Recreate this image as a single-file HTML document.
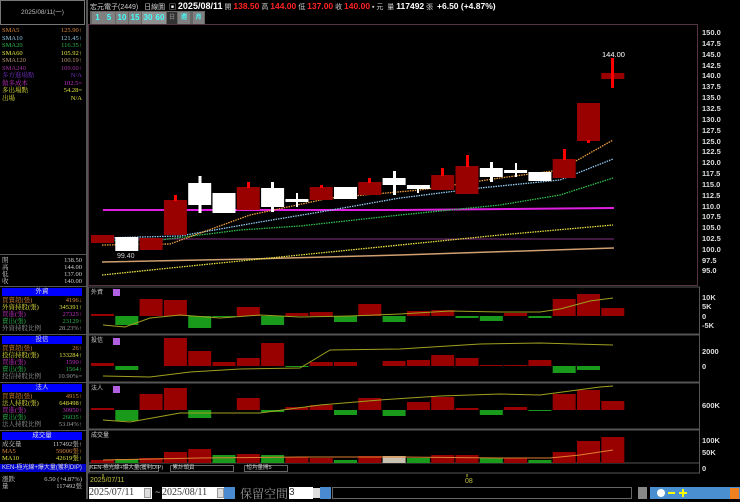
<!DOCTYPE html>
<html><head><meta charset="utf-8"><style>
*{margin:0;padding:0;box-sizing:border-box}
body{width:740px;height:499px;background:#000;overflow:hidden;position:relative;font-family:"Liberation Sans","Noto Sans CJK TC",sans-serif;font-size:7px;color:#ccc}
.a{position:absolute;white-space:nowrap}
.r{position:absolute;left:2px;width:80px;height:7px;line-height:7px;font-size:6.5px;font-family:"Liberation Serif","Noto Serif CJK SC",serif}
.r b{font-weight:normal;position:absolute;right:0}
.hd{position:absolute;left:2px;width:80px;height:8px;background:#0000ff;color:#ddd;text-align:center;font-size:6.5px;line-height:8px}
.ax{position:absolute;left:702px;font-size:7.5px;font-weight:bold;color:#ddd}
.btn{position:absolute;top:12px;height:12px;width:11px;background:#808080;color:#4ff;font-size:8px;font-weight:bold;text-align:center;line-height:12px}
</style></head><body>
<!-- left panel -->
<div class="a" style="left:0;top:0;width:85px;height:25px;border:1px solid #777;color:#bbb;text-align:center;line-height:24px;font-size:6.5px">2025/08/11(一)</div>
<div class="a" style="left:86px;top:0;width:2px;height:499px;background:#555"></div>
<div class="r" style="top:27px;color:#d8863a">SMA5<b>125.90↑</b></div>
<div class="r" style="top:34.5px;color:#8cc8e8">SMA10<b>121.45↑</b></div>
<div class="r" style="top:42px;color:#2cb84c">SMA20<b>116.35↑</b></div>
<div class="r" style="top:49.5px;color:#e0e040">SMA60<b>105.92↑</b></div>
<div class="r" style="top:57px;color:#b89870">SMA120<b>100.19↑</b></div>
<div class="r" style="top:64.5px;color:#a030a0">SMA240<b>109.60↑</b></div>
<div class="r" style="top:72px;color:#7030c0">多方進場點<b>N/A</b></div>
<div class="r" style="top:79.5px;color:#c030c0">做多成本<b>102.5=</b></div>
<div class="r" style="top:87px;color:#e0e040">多出場點<b>54.28=</b></div>
<div class="r" style="top:94.5px;color:#e0e040">出場<b>N/A</b></div>
<div class="a" style="left:0;top:254px;width:86px;height:1px;background:#555"></div>
<div class="r" style="top:257px;color:#ccc">開<b>138.50</b></div>
<div class="r" style="top:264px;color:#ccc">高<b>144.00</b></div>
<div class="r" style="top:271px;color:#ccc">低<b>137.00</b></div>
<div class="r" style="top:278px;color:#ccc">收<b>140.00</b></div>
<div class="a" style="left:0;top:286px;width:86px;height:1px;background:#555"></div>
<div class="hd" style="top:288px">外資</div>
<div class="r" style="top:297px;color:#d8863a">買賣超(張)<b>4196↓</b></div>
<div class="r" style="top:304px;color:#e0e040">外資持股(張)<b>345391↑</b></div>
<div class="r" style="top:311px;color:#c030c0">買進(張)<b>27325↑</b></div>
<div class="r" style="top:318px;color:#2cb84c">賣出(張)<b>23129↑</b></div>
<div class="r" style="top:325px;color:#999">外資持股比例<b>28.23%↑</b></div>
<div class="a" style="left:0;top:334px;width:86px;height:1px;background:#555"></div>
<div class="hd" style="top:336px">投信</div>
<div class="r" style="top:345px;color:#d8863a">買賣超(張)<b>26↑</b></div>
<div class="r" style="top:352px;color:#e0e040">投信持股(張)<b>133284↑</b></div>
<div class="r" style="top:359px;color:#c030c0">買進(張)<b>1590↑</b></div>
<div class="r" style="top:366px;color:#2cb84c">賣出(張)<b>1564↑</b></div>
<div class="r" style="top:373px;color:#999">投信持股比例<b>10.90%=</b></div>
<div class="a" style="left:0;top:382px;width:86px;height:1px;background:#555"></div>
<div class="hd" style="top:384px">法人</div>
<div class="r" style="top:393px;color:#d8863a">買賣超(張)<b>4915↑</b></div>
<div class="r" style="top:400px;color:#e0e040">法人持股(張)<b>648498↑</b></div>
<div class="r" style="top:407px;color:#c030c0">買進(張)<b>30950↑</b></div>
<div class="r" style="top:414px;color:#2cb84c">賣出(張)<b>26035↑</b></div>
<div class="r" style="top:421px;color:#999">法人持股比例<b>53.04%↑</b></div>
<div class="a" style="left:0;top:430px;width:86px;height:1px;background:#555"></div>
<div class="hd" style="top:432px">成交量</div>
<div class="r" style="top:441px;color:#ccc">成交量<b>117492張↑</b></div>
<div class="r" style="top:448px;color:#d8863a">MA5<b>59006張↑</b></div>
<div class="r" style="top:455px;color:#e0e040">MA10<b>42619張↑</b></div>
<div class="a" style="left:0;top:464px;width:86px;height:8px;background:#0000cc;color:#ddd;font-size:6px;line-height:8px;padding-left:2px">KEN-極光線+爆大量(獲利DIP)</div>
<div class="r" style="top:476px;color:#ccc">漲跌<b>6.50 (+4.87%)</b></div>
<div class="r" style="top:483px;color:#ccc">量<b>117492張</b></div>

<!-- header -->
<div class="a" style="left:90px;top:1px;font-size:7px;color:#ccc">宏元電子(2449) &nbsp; 日線圖 &nbsp;<span style="color:#fff">▣</span> <b style="color:#fff;font-size:9px">2025/08/11</b> 開 <b style="color:#f22;font-size:8.5px">138.50</b> 高 <b style="color:#f22;font-size:8.5px">144.00</b> 低 <b style="color:#f22;font-size:8.5px">137.00</b> 收 <b style="color:#f22;font-size:8.5px">140.00</b> ▪ 元 &nbsp;量 <b style="color:#fff;font-size:8.5px">117492</b> 張 &nbsp;<b style="color:#fff;font-size:8.5px">+6.50 (+4.87%)</b></div>
<div class="a" style="left:90px;top:11px;width:115px;height:14px;background:#666"></div>
<div class="btn" style="left:92px">1</div><div class="btn" style="left:103px;width:12px">5</div><div class="btn" style="left:116px;width:12px">10</div><div class="btn" style="left:129px;width:12px">15</div><div class="btn" style="left:142px;width:12px;background:#909090">30</div><div class="btn" style="left:154px;width:12px;background:#909090">60</div>
<div class="btn" style="left:167px;width:10px;background:#333;color:#777;font-size:6px">日</div><div class="btn" style="left:178px;width:12px;color:#4ff;font-size:6px">週</div><div class="btn" style="left:193px;width:11px;color:#4ff;font-size:6px">月</div>

<!-- axis labels -->
<div class="ax" style="top:28px">150.0</div><div class="ax" style="top:39px">147.5</div><div class="ax" style="top:50px">145.0</div><div class="ax" style="top:61px">142.5</div><div class="ax" style="top:71px">140.0</div><div class="ax" style="top:82px">137.5</div><div class="ax" style="top:93px">135.0</div><div class="ax" style="top:104px">132.5</div><div class="ax" style="top:115px">130.0</div><div class="ax" style="top:126px">127.5</div><div class="ax" style="top:137px">125.0</div><div class="ax" style="top:147px">122.5</div><div class="ax" style="top:158px">120.0</div><div class="ax" style="top:169px">117.5</div><div class="ax" style="top:180px">115.0</div><div class="ax" style="top:191px">112.5</div><div class="ax" style="top:202px">110.0</div><div class="ax" style="top:212px">107.5</div><div class="ax" style="top:223px">105.0</div><div class="ax" style="top:234px">102.5</div><div class="ax" style="top:245px">100.0</div><div class="ax" style="top:256px">97.5</div><div class="ax" style="top:266px">95.0</div>
<div class="ax" style="top:293px">10K</div><div class="ax" style="top:302px">5K</div><div class="ax" style="top:312px">0</div><div class="ax" style="top:321px">-5K</div>
<div class="ax" style="top:347px">2000</div><div class="ax" style="top:362px">0</div>
<div class="ax" style="top:401px">600K</div>
<div class="ax" style="top:436px">100K</div><div class="ax" style="top:448px">50K</div><div class="ax" style="top:464px">0</div>

<svg class="a" style="left:0;top:0" width="740" height="499">
<g fill="none">
<rect x="88.5" y="24.5" width="609" height="261" stroke="#553344"/>
<rect x="88.5" y="287" width="611" height="47" stroke="#555"/>
<rect x="88.5" y="335" width="611" height="47" stroke="#555"/>
<rect x="88.5" y="383" width="611" height="46" stroke="#555"/>
<rect x="88.5" y="430" width="611" height="33" stroke="#555"/>
<rect x="88.5" y="463" width="611" height="10" stroke="#555"/>
</g>
<line x1="103" y1="239" x2="614" y2="239" stroke="#803080" stroke-width="1"/>
<polyline points="103,210 400,210 614,208" fill="none" stroke="#e020e0" stroke-width="2"/>
<polyline points="102,262 250,259 400,255 614,248" fill="none" stroke="#d0a070" stroke-width="1.5"/>
<g fill="none" stroke-width="1.3" stroke-dasharray="1.5,1">
<polyline points="102,275 200,265 300,255 400,245 500,235 613,225" stroke="#e8e040"/>
<polyline points="102,241 160,240 240,230 300,226 400,215 500,205 560,195 613,178" stroke="#30c050"/>
<polyline points="102,238 180,236 260,222 320,212 400,198 480,188 560,180 613,159" stroke="#90c8f0"/>
<polyline points="102,245 170,244 250,215 330,198 420,190 500,178 560,170 613,140" stroke="#f0a040"/>
</g>
<g fill="#990000">
<rect x="91" y="235" width="23" height="8"/><rect x="139.6" y="238" width="23" height="12"/><rect x="163.9" y="200" width="23" height="35"/><rect x="236.8" y="187" width="23" height="23"/><rect x="309.7" y="187" width="23" height="13"/><rect x="358.3" y="182" width="23" height="13"/><rect x="431.2" y="175" width="23" height="15"/><rect x="455.5" y="166" width="23" height="28"/><rect x="552.7" y="159" width="23" height="19"/><rect x="577" y="103" width="23" height="38"/><rect x="601.3" y="73" width="23" height="6"/>
</g>
<g fill="#f00">
<rect x="174" y="195" width="3" height="6"/><rect x="247" y="182" width="3" height="6"/><rect x="320" y="185" width="3" height="3"/><rect x="368" y="178" width="3" height="5"/><rect x="441" y="168" width="3" height="8"/><rect x="466" y="155" width="3" height="12"/><rect x="563" y="149" width="3" height="11"/><rect x="587" y="140" width="3" height="3"/><rect x="611" y="58" width="3" height="30"/>
</g>
<g fill="#fff">
<rect x="115.3" y="237" width="23" height="14"/><rect x="188.2" y="183" width="23" height="22"/><rect x="198.5" y="176" width="3" height="37"/><rect x="212.5" y="193" width="23" height="20"/><rect x="261.1" y="188" width="23" height="19"/><rect x="271" y="182" width="3" height="30"/><rect x="285.4" y="199" width="23" height="3"/><rect x="296" y="193" width="2" height="14"/><rect x="334" y="187" width="23" height="12"/><rect x="382.6" y="178" width="23" height="7"/><rect x="393" y="171" width="3" height="24"/><rect x="406.9" y="185" width="23" height="4"/><rect x="417" y="185" width="2" height="8"/><rect x="479.8" y="168" width="23" height="9"/><rect x="490" y="162" width="3" height="20"/><rect x="504.1" y="170" width="23" height="3"/><rect x="515" y="163" width="2" height="14"/><rect x="528.4" y="172" width="23" height="9"/>
</g>
<text x="117" y="258" fill="#ccc" font-size="7" font-family="Liberation Sans">99.40</text>
<text x="602" y="57" fill="#fff" font-size="7.5" font-family="Liberation Sans">144.00</text>
<g font-size="6" fill="#ccc" font-family="Noto Sans CJK TC,sans-serif">
<text x="91" y="294">外資</text><text x="91" y="342">投信</text><text x="91" y="390">法人</text><text x="91" y="437">成交量</text>
</g>
<g fill="#b060e0"><rect x="113" y="289" width="7" height="7"/><rect x="113" y="338" width="7" height="7"/><rect x="113" y="386" width="7" height="7"/></g>
<g fill="#990000">
<rect x="91" y="314" width="23" height="2"/><rect x="139.6" y="299" width="23" height="17"/><rect x="163.9" y="300" width="23" height="16"/><rect x="236.8" y="307" width="23" height="9"/><rect x="285.4" y="313" width="23" height="3"/><rect x="309.7" y="312" width="23" height="4"/><rect x="358.3" y="304" width="23" height="12"/><rect x="406.9" y="311" width="23" height="5"/><rect x="431.2" y="310" width="23" height="6"/><rect x="504.1" y="313" width="23" height="3"/><rect x="552.7" y="299" width="23" height="17"/><rect x="577" y="294" width="23" height="22"/><rect x="601.3" y="308" width="23" height="8"/>
<rect x="91" y="363" width="23" height="3"/><rect x="163.9" y="338" width="23" height="28"/><rect x="188.2" y="351" width="23" height="15"/><rect x="212.5" y="362" width="23" height="4"/><rect x="236.8" y="358" width="23" height="8"/><rect x="261.1" y="343" width="23" height="23"/><rect x="309.7" y="362" width="23" height="4"/><rect x="334" y="362" width="23" height="4"/><rect x="382.6" y="361" width="23" height="5"/><rect x="406.9" y="360" width="23" height="6"/><rect x="431.2" y="355" width="23" height="11"/><rect x="455.5" y="358" width="23" height="8"/><rect x="479.8" y="365" width="23" height="1"/><rect x="504.1" y="365" width="23" height="1"/><rect x="528.4" y="360" width="23" height="6"/>
<rect x="91" y="408" width="23" height="2"/><rect x="139.6" y="394" width="23" height="16"/><rect x="163.9" y="388" width="23" height="22"/><rect x="236.8" y="398" width="23" height="12"/><rect x="285.4" y="407" width="23" height="3"/><rect x="309.7" y="405" width="23" height="5"/><rect x="358.3" y="398" width="23" height="12"/><rect x="406.9" y="402" width="23" height="8"/><rect x="431.2" y="397" width="23" height="13"/><rect x="455.5" y="408" width="23" height="2"/><rect x="504.1" y="407" width="23" height="3"/><rect x="552.7" y="394" width="23" height="16"/><rect x="577" y="390" width="23" height="20"/><rect x="601.3" y="401" width="23" height="9"/>
<rect x="91" y="460" width="23" height="3"/><rect x="139.6" y="458" width="23" height="5"/><rect x="163.9" y="452" width="23" height="11"/><rect x="188.2" y="449" width="23" height="14"/><rect x="236.8" y="454" width="23" height="9"/><rect x="285.4" y="457" width="23" height="6"/><rect x="309.7" y="458" width="23" height="5"/><rect x="358.3" y="456" width="23" height="7"/><rect x="431.2" y="455" width="23" height="8"/><rect x="455.5" y="455" width="23" height="8"/><rect x="504.1" y="458" width="23" height="5"/><rect x="552.7" y="452" width="23" height="11"/><rect x="577" y="441" width="23" height="22"/><rect x="601.3" y="437" width="23" height="26"/>
</g>
<g fill="#1a9a1a">
<rect x="115.3" y="316" width="23" height="9"/><rect x="188.2" y="316" width="23" height="12"/><rect x="212.5" y="316" width="23" height="1"/><rect x="261.1" y="316" width="23" height="9"/><rect x="334" y="316" width="23" height="6"/><rect x="382.6" y="316" width="23" height="6"/><rect x="455.5" y="316" width="23" height="2"/><rect x="479.8" y="316" width="23" height="5"/><rect x="528.4" y="316" width="23" height="2"/>
<rect x="115.3" y="366" width="23" height="4"/><rect x="285.4" y="366" width="23" height="1"/><rect x="552.7" y="366" width="23" height="7"/><rect x="577" y="366" width="23" height="4"/>
<rect x="115.3" y="410" width="23" height="11"/><rect x="188.2" y="410" width="23" height="8"/><rect x="261.1" y="410" width="23" height="2"/><rect x="334" y="410" width="23" height="5"/><rect x="382.6" y="410" width="23" height="6"/><rect x="479.8" y="410" width="23" height="5"/><rect x="528.4" y="410" width="23" height="1"/>
<rect x="115.3" y="459" width="23" height="4"/><rect x="212.5" y="455" width="23" height="8"/><rect x="261.1" y="455" width="23" height="8"/><rect x="334" y="460" width="23" height="3"/><rect x="406.9" y="458" width="23" height="5"/><rect x="479.8" y="458" width="23" height="5"/><rect x="528.4" y="460" width="23" height="3"/>
</g>
<rect x="382.6" y="456" width="23" height="7" fill="#c8c0b0"/>
<g fill="none" stroke="#a0a020" stroke-width="1">
<polyline points="103,325 125,327 150,318 180,315 220,318 260,315 300,317 350,316 400,314 450,311 500,312 540,312 560,309 590,301 613,298"/>
<polyline points="103,376 150,377 190,372 240,369 300,368 330,350 400,349 480,344 540,343 575,344 613,345"/>
<polyline points="103,420 130,422 180,413 260,413 320,405 380,400 440,396 500,394 540,395 570,391 600,387 613,386"/>
<polyline points="103,460 200,458 300,457 400,457 500,458 550,458 580,455 613,450" stroke="#e08030"/>
</g>
<text x="90" y="482" fill="#c0c040" font-size="7" font-family="Liberation Sans">2025/07/11</text>
<text x="465" y="483" fill="#c0c040" font-size="7" font-family="Liberation Sans">08</text>
<line x1="103" y1="474" x2="103" y2="477" stroke="#c0c040"/><line x1="467" y1="474" x2="467" y2="477" stroke="#c0c040"/>
</svg>
<div class="a" style="left:89px;top:465px;width:70px;height:7px;border:1px solid #666;font-size:5.5px;line-height:5px;color:#ccc">KEN-極光線+爆大量(獲利DIP)</div>
<div class="a" style="left:170px;top:465px;width:64px;height:7px;border:1px solid #666;font-size:5.5px;line-height:5px;color:#ccc">&nbsp;累計頭頁</div>
<div class="a" style="left:244px;top:465px;width:44px;height:7px;border:1px solid #666;font-size:5.5px;line-height:5px;color:#ccc">&nbsp;短均量開5</div>
<div class="a" style="left:89px;top:487px;width:63px;height:12px;background:#fff;color:#333;font-size:10px;line-height:12px;font-family:'Liberation Serif',serif">2025/07/11</div>
<div class="a" style="left:144px;top:488px;width:7px;height:10px;background:#ddd;border:1px solid #999"></div>
<div class="a" style="left:155px;top:487px;color:#ccc;font-size:9px">~</div>
<div class="a" style="left:162px;top:487px;width:63px;height:12px;background:#fff;color:#333;font-size:10px;line-height:12px;font-family:'Liberation Serif',serif">2025/08/11</div>
<div class="a" style="left:217px;top:488px;width:7px;height:10px;background:#ddd;border:1px solid #999"></div>
<div class="a" style="left:224px;top:487px;width:11px;height:12px;background:#4a8ad0"></div>
<div class="a" style="left:240px;top:485px;color:#999;font-size:12px;font-family:'Noto Serif CJK SC',serif">保留空間</div>
<div class="a" style="left:289px;top:487px;width:24px;height:12px;background:#fff;color:#333;font-size:10px;line-height:12px">3</div>
<div class="a" style="left:313px;top:488px;width:7px;height:10px;background:#ddd"></div>
<div class="a" style="left:320px;top:487px;width:11px;height:12px;background:#4a8ad0"></div>
<div class="a" style="left:332px;top:487px;width:300px;height:12px;background:#000;border:1px solid #666"></div>
<div class="a" style="left:638px;top:487px;width:9px;height:12px;background:#888"></div>
<div class="a" style="left:650px;top:487px;width:90px;height:12px;background:#4a90d0"></div>
<div class="a" style="left:657px;top:489px;width:8px;height:8px;border-radius:50%;background:#fff"></div>
<div class="a" style="left:668px;top:492px;width:7px;height:2px;background:#ff0"></div>
<div class="a" style="left:679px;top:492px;width:8px;height:2px;background:#ff0"></div><div class="a" style="left:682px;top:489px;width:2px;height:8px;background:#ff0"></div>
<div class="a" style="left:730px;top:488px;width:9px;height:11px;background:#f08020"></div>
</body></html>
